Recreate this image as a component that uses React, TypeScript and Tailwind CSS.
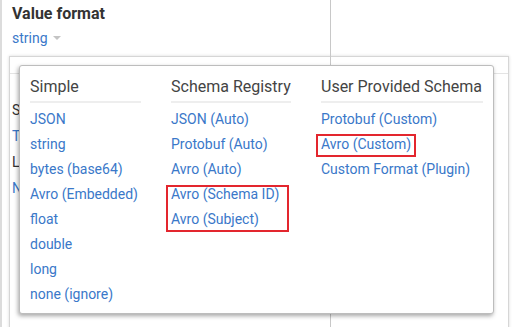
import React from "react";

const simple = ["JSON", "string", "bytes (base64)", "Avro (Embedded)", "float", "double", "long", "none (ignore)"];
const registry = ["JSON (Auto)", "Protobuf (Auto)", "Avro (Auto)", "Avro (Schema ID)", "Avro (Subject)"];
const userSchema = ["Protobuf (Custom)", "Avro (Custom)", "Custom Format (Plugin)"];

const Column = ({ title, items, width }: { title: string; items: string[]; width: string }) => (
  <div className={width}>
    <div className="text-[16px] leading-[20px] text-[#444] pb-1 border-b-2 border-[#eeeeee] whitespace-nowrap">
      {title}
    </div>
    <div className="mt-1">
      {items.map((item) => (
        <div key={item} className="text-[14px] leading-[25px] text-[#3a78c9] whitespace-nowrap cursor-pointer">
          {item}
        </div>
      ))}
    </div>
  </div>
);

const App = () => {
  return (
    <div
      className="relative w-[521px] h-[327px] overflow-hidden bg-white border-l-2 border-[#dcdcdc]"
      style={{ fontFamily: "Roboto, 'Liberation Sans', sans-serif" }}
    >
      {/* vertical divider behind the popup */}
      <div className="absolute left-[328px] top-0 h-full w-px bg-[#c8c8c8] z-10" />

      <div className="pl-[10px] pt-[4px]">
        <div className="text-[16px] leading-[20px] font-bold text-[#333]">Value format</div>
        <div className="flex items-center gap-[5px] mt-[5px]">
          <span className="text-[14px] leading-[18px] text-[#3a78c9]">string</span>
          <span className="w-0 h-0 border-l-[4px] border-r-[4px] border-t-[4px] border-l-transparent border-r-transparent border-t-[#c4c4c4]" />
        </div>
      </div>

      {/* panel behind */}
      <div className="ml-[7px] mr-[12px] mt-[9px] h-[300px] border border-[#d6d6d6] shadow-[0_0_3px_rgba(0,0,0,0.15)]">
        <div className="h-[17px] border-b border-[#e4e4e4]" />
        <div className="ml-[2px] pt-[25px] w-[9px] overflow-hidden flex flex-col gap-[4px] text-[14px] leading-[22px]">
          <div className="text-[#333]">S</div>
          <div className="text-[#3a78c9]">T</div>
          <div className="text-[#333]">L</div>
          <div className="text-[#3a78c9]">N</div>
        </div>
      </div>

      {/* format popup */}
      <div className="absolute left-[17px] top-[65px] w-[475px] h-[249px] z-20 bg-white rounded-[3px] border border-[#bdbdbd] shadow-[-1px_2px_4px_rgba(0,0,0,0.35)] pl-[10px] pt-[11px]">
        <div className="flex gap-[30px]">
          <Column title="Simple" items={simple} width="w-[111px]" />
          <Column title="Schema Registry" items={registry} width="w-[120px]" />
          <Column title="User Provided Schema" items={userSchema} width="w-[162px]" />
        </div>
        <div className="absolute left-[146px] top-[119px] w-[123px] h-[47px] border-2 border-[#e3262e]" />
        <div className="absolute left-[296px] top-[68px] w-[100px] h-[23px] border-2 border-[#e3262e]" />
      </div>
    </div>
  );
};

export default App;
